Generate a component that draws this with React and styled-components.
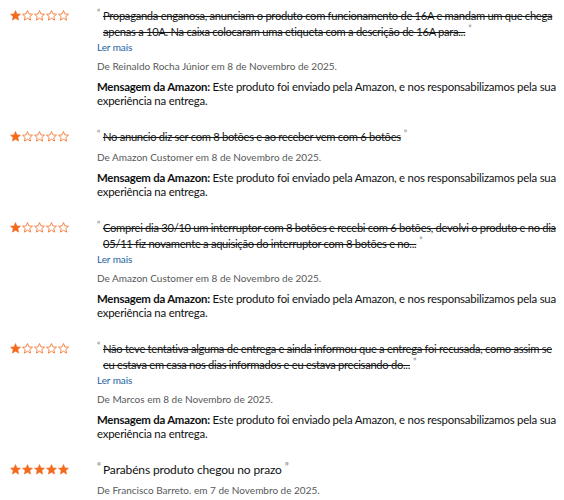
import React from "react";
import styled, { createGlobalStyle } from "styled-components";

const GlobalStyle = createGlobalStyle`
  html, body {
    margin: 0;
    padding: 0;
    background: #fff;
  }
  body {
    font-family: Lato, "Open Sans", sans-serif;
    color: #0f1111;
  }
`;

const colors = {
  text: "#0f1111",
  strike: "#161818",
  muted: "#565959",
  quote: "#7a7a7a",
  link: "#2162a1",
  star: "#f36a1d",
};

const StyledList = styled.div`
  padding: 8px 0 0 10px;
  display: flex;
  flex-flow: column;
  gap: 21px;
`;

const StyledReview = styled.div`
  display: flex;
  flex-flow: row;
  align-items: flex-start;
`;

const StyledStars = styled.div`
  width: 87px;
  flex: none;
  display: flex;
  gap: 1px;
  padding-top: 2px;
  svg {
    display: block;
  }
`;

const StyledBody = styled.div`
  flex: 1;
  min-width: 0;
  padding-right: 2px;
`;

const StyledQuoteText = styled.div`
  display: flex;
  flex-flow: row;
  font-size: ${(p) => (p.struck ? "11.2px" : "12px")};
  letter-spacing: ${(p) => (p.struck ? "-0.3px" : "-0.15px")};
  line-height: 16px;
  color: ${(p) => (p.struck ? colors.strike : colors.text)};
  > span.open {
    flex: none;
    width: 6px;
    font-size: ${(p) => (p.struck ? "9px" : "11px")};
    line-height: 10px;
    color: ${colors.quote};
  }
  > p {
    flex: 1;
    margin: 0;
    text-decoration: ${(p) => (p.struck ? "line-through" : "none")};
  }
  span.close {
    display: inline-block;
    margin-left: 3px;
    font-size: ${(p) => (p.struck ? "9px" : "11px")};
    line-height: 10px;
    vertical-align: top;
    color: ${colors.quote};
    text-decoration: none;
  }
`;

const StyledLink = styled.a`
  display: block;
  font-size: 10px;
  letter-spacing: -0.1px;
  line-height: 14px;
  color: ${colors.link};
  text-decoration: none;
  cursor: pointer;
`;

const StyledAuthor = styled.p`
  margin: 5px 0 0;
  font-size: 10px;
  line-height: 14px;
  color: ${colors.muted};
`;

const StyledMessage = styled.p`
  margin: 7px 0 0;
  padding-right: 4px;
  font-size: 11.4px;
  letter-spacing: -0.22px;
  line-height: 14px;
  color: ${colors.text};
  b {
    font-weight: 700;
  }
`;

const STAR_PATH =
  "M5.5 0.6 L6.95 3.9 L10.5 4.2 L7.8 6.55 L8.6 10.1 L5.5 8.25 L2.4 10.1 L3.2 6.55 L0.5 4.2 L4.05 3.9 Z";

const Star = ({ filled }) => (
  <svg width="11" height="11" viewBox="0 0 11 11">
    <path
      d={STAR_PATH}
      fill={filled ? colors.star : "none"}
      stroke={colors.star}
      strokeWidth={filled ? 0.6 : 0.8}
      strokeLinejoin="round"
    />
  </svg>
);

const reviews = [
  {
    rating: 1,
    struck: true,
    text: "Propaganda enganosa, anunciam o produto com funcionamento de 16A e mandam um que chega apenas a 10A. Na caixa colocaram uma etiqueta com a descrição de 16A para...",
    more: true,
    author: "De Reinaldo Rocha Júnior em 8 de Novembro de 2025.",
    message: true,
  },
  {
    rating: 1,
    struck: true,
    text: "No anuncio diz ser com 8 botões e ao receber vem com 6 botões",
    more: false,
    author: "De Amazon Customer em 8 de Novembro de 2025.",
    message: true,
  },
  {
    rating: 1,
    struck: true,
    text: "Comprei dia 30/10 um interruptor com 8 botões e recebi com 6 botões, devolvi o produto e no dia 05/11 fiz novamente a aquisição do interruptor com 8 botões e no...",
    more: true,
    author: "De Amazon Customer em 8 de Novembro de 2025.",
    message: true,
  },
  {
    rating: 1,
    struck: true,
    text: "Não teve tentativa alguma de entrega e ainda informou que a entrega foi recusada, como assim se eu estava em casa nos dias informados e eu estava precisando do...",
    more: true,
    author: "De Marcos em 8 de Novembro de 2025.",
    message: true,
  },
  {
    rating: 5,
    struck: false,
    text: "Parabéns produto chegou no prazo",
    more: false,
    author: "De Francisco Barreto. em 7 de Novembro de 2025.",
    message: false,
  },
];

const Review = ({ review }) => (
  <StyledReview>
    <StyledStars>
      {[1, 2, 3, 4, 5].map((n) => (
        <Star key={n} filled={n <= review.rating} />
      ))}
    </StyledStars>
    <StyledBody>
      <StyledQuoteText struck={review.struck}>
        <span className="open">“</span>
        <p>
          {review.text}
          <span className="close">”</span>
        </p>
      </StyledQuoteText>
      {review.more && <StyledLink>Ler mais</StyledLink>}
      <StyledAuthor>{review.author}</StyledAuthor>
      {review.message && (
        <StyledMessage>
          <b>Mensagem da Amazon:</b> Este produto foi enviado pela Amazon, e
          nos responsabilizamos pela sua experiência na entrega.
        </StyledMessage>
      )}
    </StyledBody>
  </StyledReview>
);

const App = () => {
  return (
    <>
      <GlobalStyle />
      <StyledList>
        {reviews.map((r, i) => (
          <Review key={i} review={r} />
        ))}
      </StyledList>
    </>
  );
};

export default App;
